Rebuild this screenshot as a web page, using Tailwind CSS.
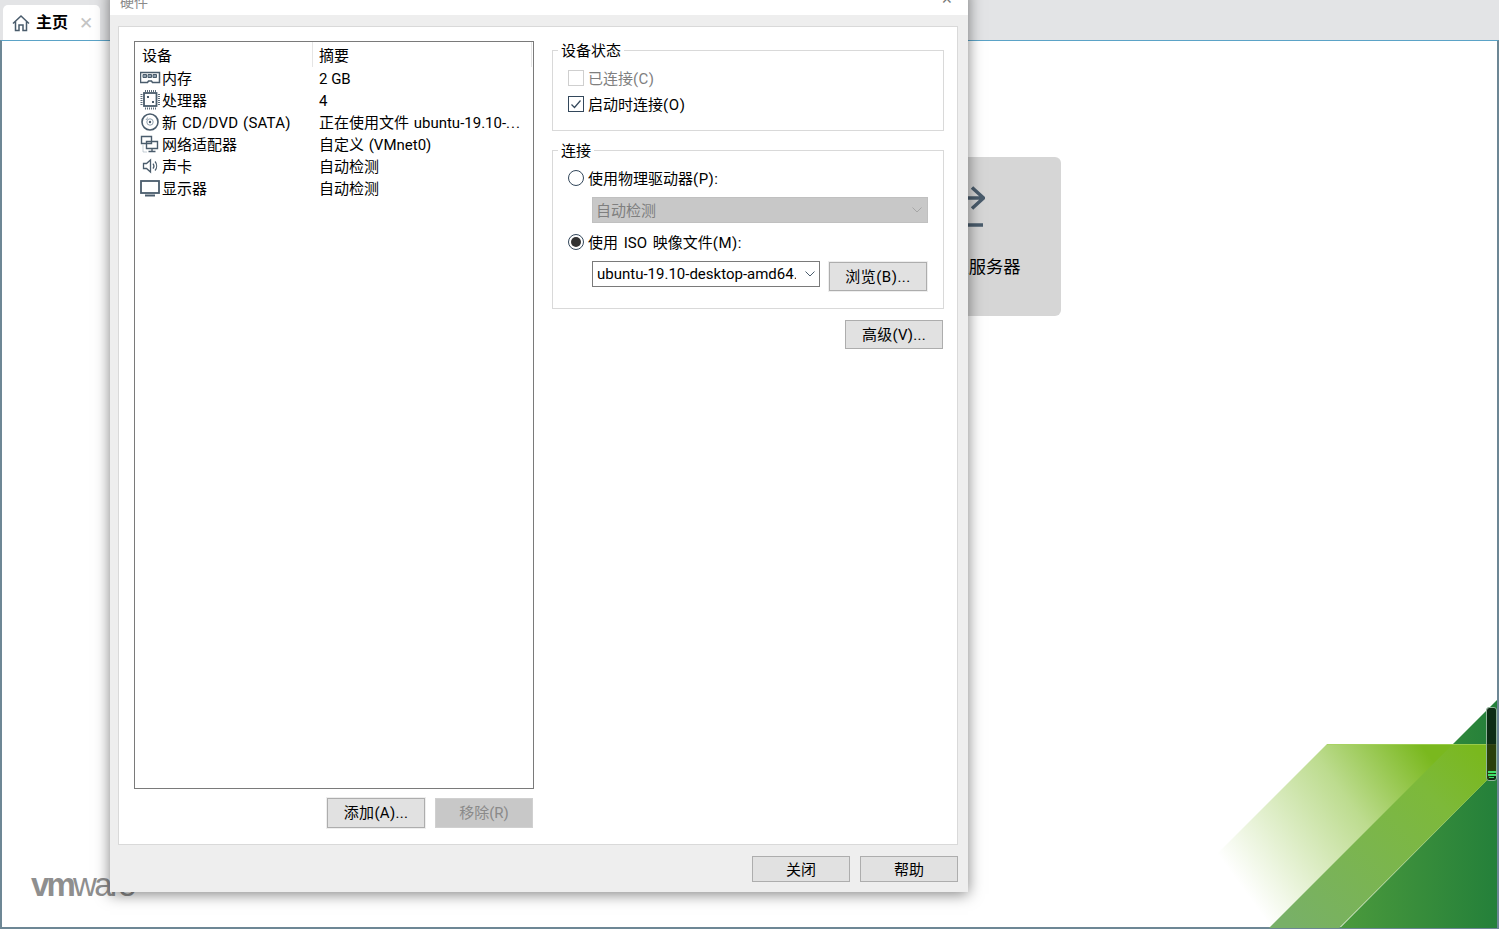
<!DOCTYPE html>
<html lang="zh-CN">
<head>
<meta charset="UTF-8">
<title>硬件</title>
<script src="https://cdn.jsdelivr.net/npm/@tailwindcss/browser@4"></script>
</head>
<body class="relative w-[1499px] h-[929px] overflow-hidden bg-white text-[15px] leading-[20px] text-black font-['Roboto','Noto_Sans_CJK_SC',sans-serif]">

<!-- Tab strip -->
<div class="h-[40px] bg-[#e3e4e6] pl-[3px] pt-[5px]">
    <div class="w-[97px] h-[35px] bg-white rounded-t-[5px] flex items-center pl-[9px]">
        <svg class="w-[18px] h-[18px]" viewBox="0 0 18 18" fill="none" stroke="#4a5c6c" stroke-width="1.500"><path d="M1 9.500 9 2l8 7.500M3.500 7.500V16.500H7V11h4v5.500h3.500V7.500"/></svg>
        <span class="ml-[6px] text-[16px] font-bold">主页</span>
        <span class="ml-[11px] text-[#c4c4c4] text-[17px]">✕</span>
    </div>
</div>

<!-- Main area -->
<div class="relative h-[889px] border-t border-t-[#5ba3c7] border-x-2 border-b-2 border-x-[#6d8795] border-b-[#6d8795] bg-white">
    <!-- Connect card -->
    <div class="absolute left-[858px] top-[116px] w-[201px] h-[159px] pr-[1px] bg-[#d6d6d6] rounded-[6px] flex flex-col items-center pt-[28px]">
        <svg class="w-[50px] h-[45px]" viewBox="0 0 50 45" fill="none" stroke="#4a5c6c" stroke-width="3.500"><path d="M0 13H48M37 2.500l11.500 10.500-11.500 10.500M0 40H48"/></svg>
        <span class="mt-[27px] text-[17.300px] whitespace-nowrap">连接远程服务器</span>
    </div>

    <!-- vmware logo -->
    <div class="absolute left-[29px] top-[826px] font-['Liberation_Sans',sans-serif] text-[33px] leading-[36px] tracking-[-2.800px] text-[#8f8f8f]"><span class="font-bold">vm</span>ware</div>

    <!-- Corner graphic -->
    <svg class="absolute left-[1198px] top-[649px]" width="299" height="238" viewBox="1200 690 299 238">
        <defs>
            <linearGradient id="darkGreen" x1="1340" y1="0" x2="1497" y2="0" gradientUnits="userSpaceOnUse">
                <stop offset="0" stop-color="#4b9a3c"/><stop offset="1" stop-color="#24803a"/>
            </linearGradient>
            <linearGradient id="midGreen" x1="1290" y1="927" x2="1470" y2="744" gradientUnits="userSpaceOnUse">
                <stop offset="0" stop-color="#78b068"/><stop offset="0.75" stop-color="#7db93a"/><stop offset="1" stop-color="#7ab81e"/>
            </linearGradient>
            <linearGradient id="fadeGreen" x1="1240" y1="885" x2="1425" y2="750" gradientUnits="userSpaceOnUse">
                <stop offset="0" stop-color="#7ab81e" stop-opacity="0"/><stop offset="0.6" stop-color="#7ab81e" stop-opacity="0.5"/><stop offset="1" stop-color="#7ab81e"/>
            </linearGradient>
        </defs>
        <polygon points="1497,700 1497,928 1340,928 1487,780 1452,745" fill="url(#darkGreen)"/>
        <polygon points="1327,744 1497,744 1497,770 1339,928 1269,928 1211,860" fill="url(#fadeGreen)"/>
        <polygon points="1269,928 1453,744 1497,744 1497,770 1339,928" fill="url(#midGreen)"/>
        <line x1="1327" y1="744.500" x2="1497" y2="744.500" stroke="#a6d35c" stroke-opacity="0.7"/>
    </svg>

    <!-- Level indicator -->
    <div class="absolute left-[1484px] top-[666px] w-[11px] h-[74px] rounded-[3px] border border-[#8fb59a] bg-black/65 flex flex-col justify-end items-center pb-[2px] gap-[1px]">
        <span class="w-[8px] h-[2px] bg-[#3fe06a]"></span>
        <span class="w-[8px] h-[2px] bg-[#3fe06a]"></span>
        <span class="w-[5px] h-[1px] bg-[#3fe06a]"></span>
    </div>
</div>

<!-- Dialog -->
<div class="absolute left-[110px] top-[-13px] w-[858px] h-[905px] flex flex-col bg-[#eeeeee] shadow-[0_2px_14px_rgba(0,0,0,0.5)]">
    <div class="h-[28px] shrink-0 bg-white flex items-end justify-between pl-[10px] pr-[15px] text-[#8a8a8a] text-[14px]">
        <span class="leading-[26px]">硬件</span>
        <span class="leading-[32px] text-[#777777]">✕</span>
    </div>

    <div class="ml-[8px] mt-[11px] w-[840px] h-[819px] shrink-0 bg-white border border-[#d9d9d9] flex pl-[15px] pt-[14px]">
        <!-- Device list -->
        <div class="w-[400px]">
            <div class="h-[748px] border border-[#7a7a7a]">
                <div class="relative h-[25px] flex items-center">
                    <span class="w-[177px] pl-[7px] mt-[2px]">设备</span>
                    <span class="pl-[7px] mt-[2px]">摘要</span>
                    <span class="absolute left-[177px] top-0 h-[25px] w-px bg-[#e5e5e5]"></span>
                    <span class="absolute right-[1px] top-0 h-[25px] w-px bg-[#e5e5e5]"></span>
                </div>
                <div class="h-[22px] flex items-center">
                    <div class="w-[177px] flex items-center pl-[5px]">
                        <svg class="w-[22px] h-[22px] shrink-0" viewBox="0 0 22 22" fill="none" stroke="#4a5c6c"><path d="M.5 5.500h19v10h-7l-1-1.500h-3l-1 1.500h-7z" stroke-width="1.500"/><path d="M3 7.500h3.500v3H3zM8 7.500h3.500v3H8zM13 7.500h3.500v3H13z" fill="#8fa0ae" stroke-width="1"/></svg>
                        <span class="mt-[2px]">内存</span>
                    </div>
                    <span class="pl-[7px] mt-[2px]">2 GB</span>
                </div>
                <div class="h-[22px] flex items-center">
                    <div class="w-[177px] flex items-center pl-[5px]">
                        <svg class="w-[22px] h-[22px] shrink-0" viewBox="0 0 22 22" fill="none" stroke="#4a5c6c"><rect x="4" y="4" width="12.500" height="13" stroke-width="1.800"/><path d="M5 2h11M5 19.500h11M1.500 5v11M19 5v11" stroke-width="2" stroke-dasharray="1 1" stroke="#5f6f7d"/><path d="M7 7h2v2H7zM12 12h2v2h-2z" fill="#4a5c6c" stroke="none"/></svg>
                        <span class="mt-[2px]">处理器</span>
                    </div>
                    <span class="pl-[7px] mt-[2px]">4</span>
                </div>
                <div class="h-[22px] flex items-center">
                    <div class="w-[177px] flex items-center pl-[5px]">
                        <svg class="w-[22px] h-[22px] shrink-0" viewBox="0 0 22 22" fill="none" stroke="#4a5c6c"><circle cx="10" cy="11" r="8" stroke-width="1.600"/><circle cx="10" cy="11" r="3.200" stroke="#8fa0ae" stroke-width="1"/><circle cx="10" cy="11" r="1.200" fill="#4a5c6c" stroke="none"/><path d="M6 9a5 5 0 0 1 2-2.400" stroke="#8fa0ae"/></svg>
                        <span class="mt-[2px] whitespace-nowrap [word-spacing:1px] tracking-[0.2px]">新 CD/DVD (SATA)</span>
                    </div>
                    <span class="pl-[7px] mt-[2px] whitespace-nowrap [word-spacing:1px]">正在使用文件 ubuntu-19.10-<span class="tracking-[1px]">...</span></span>
                </div>
                <div class="h-[22px] flex items-center">
                    <div class="w-[177px] flex items-center pl-[5px]">
                        <svg class="w-[22px] h-[22px] shrink-0" viewBox="0 0 22 22" fill="none" stroke="#4a5c6c"><path d="M1.500 3.500h10v7h-10zM6.500 8.500h11v7h-11zM12 15.500v3M8.500 18.500h7" stroke-width="1.400" fill="white"/><path d="M3 12.500v6.500h4" stroke="#8fa0ae" stroke-dasharray="1 1"/></svg>
                        <span class="mt-[2px]">网络适配器</span>
                    </div>
                    <span class="pl-[7px] mt-[2px] [word-spacing:1px]">自定义 (VMnet0)</span>
                </div>
                <div class="h-[22px] flex items-center">
                    <div class="w-[177px] flex items-center pl-[5px]">
                        <svg class="w-[22px] h-[22px] shrink-0" viewBox="0 0 22 22" fill="none" stroke="#4a5c6c"><path d="M3.500 8.500H6.500L10.500 5V17L6.500 13.500H3.500z" stroke-width="1.300"/><path d="M13 8.500a4 4 0 0 1 0 5M15 6.500a7 7 0 0 1 0 9" stroke-width="1.200"/></svg>
                        <span class="mt-[2px]">声卡</span>
                    </div>
                    <span class="pl-[7px] mt-[2px]">自动检测</span>
                </div>
                <div class="h-[22px] flex items-center">
                    <div class="w-[177px] flex items-center pl-[5px]">
                        <svg class="w-[22px] h-[22px] shrink-0" viewBox="0 0 22 22" fill="none" stroke="#4a5c6c"><rect x="1" y="4" width="18" height="12" stroke-width="1.800"/><path d="M5 18.500h10" stroke-width="2"/></svg>
                        <span class="mt-[2px]">显示器</span>
                    </div>
                    <span class="pl-[7px] mt-[2px]">自动检测</span>
                </div>
            </div>
            <div class="mt-[9px] pr-[1px] flex justify-end gap-[10px]">
                <button class="w-[98px] h-[30px] tracking-[0.3px] bg-[#e1e1e1] border border-[#adadad] outline outline-[#eeeeee]">添加(A)...</button>
                <button class="w-[98px] h-[30px] bg-[#c8c8c8] border border-[#d0d0d0] text-[#8a8a8a]">移除(R)</button>
            </div>
        </div>

        <!-- Settings -->
        <div class="ml-[18px] w-[392px] flex flex-col">
            <div class="mt-[9px] h-[81px] border border-[#d9d9d9] pl-[15px]">
                <div class="-mt-[11px] -ml-[10px] w-fit h-[20px] leading-[22px] bg-white px-[3px]">设备状态</div>
                <div class="mt-[10px] h-[16px] flex items-center gap-[4px] text-[#7f7f7f]">
                    <span class="w-[16px] h-[16px] bg-white border border-[#cfcfcf]"></span>
                    <span class="mt-[2px]">已连接<span class="tracking-[0.4px]">(C)</span></span>
                </div>
                <div class="mt-[10px] h-[16px] flex items-center gap-[4px]">
                    <span class="w-[16px] h-[16px] border border-[#33475b] flex items-center justify-center">
                        <svg class="w-[12px] h-[12px]" viewBox="0 0 12 12" fill="none" stroke="#33475b" stroke-width="1.200"><path d="M1.500 6.500 4.500 9.500 10.500 2.500"/></svg>
                    </span>
                    <span class="mt-[2px]">启动时连接<span class="tracking-[0.6px]">(O)</span></span>
                </div>
            </div>

            <div class="mt-[19px] h-[159px] border border-[#d9d9d9] pl-[15px]">
                <div class="-mt-[11px] -ml-[10px] w-fit h-[20px] leading-[22px] bg-white px-[3px]">连接</div>
                <div class="mt-[10px] h-[16px] flex items-center gap-[4px]">
                    <span class="w-[16px] h-[16px] rounded-full border border-[#33475b]"></span>
                    <span class="mt-[2px]">使用物理驱动器<span class="tracking-[0.5px]">(P):</span></span>
                </div>
                <div class="mt-[11px] ml-[24px] w-[336px] h-[26px] bg-[#c8c8c8] border border-[#c0c0c0] flex items-center justify-between pl-[3px] pr-[5px] text-[#7f7f7f]">
                    <span class="mt-[2px]">自动检测</span>
                    <svg class="w-[10px] h-[6px]" viewBox="0 0 10 6" fill="none" stroke="#a6a6a6"><path d="M.5.500 5 5 9.500.5"/></svg>
                </div>
                <div class="mt-[11px] h-[16px] flex items-center gap-[4px]">
                    <span class="w-[16px] h-[16px] rounded-full border border-[#33475b] flex items-center justify-center">
                        <span class="w-[10px] h-[10px] rounded-full bg-[#333333]"></span>
                    </span>
                    <span class="mt-[2px] [word-spacing:2px] whitespace-nowrap">使用 ISO 映像文件<span class="tracking-[0.5px]">(M):</span></span>
                </div>
                <div class="mt-[11px] ml-[24px] flex items-start">
                    <div class="w-[228px] h-[26px] pb-[1px] bg-white border border-[#7a7a7a] flex items-center pl-[4px] pr-[4px]">
                        <span class="w-[199px] overflow-hidden whitespace-nowrap">ubuntu-19.10-desktop-amd64.iso</span>
                        <svg class="ml-auto w-[10px] h-[6px] shrink-0" viewBox="0 0 10 6" fill="none" stroke="#4a5c6c"><path d="M.5.500 5 5 9.500.5"/></svg>
                    </div>
                    <button class="ml-[9px] mt-[1px] w-[98px] h-[29px] tracking-[0.5px] bg-[#e1e1e1] border border-[#adadad] outline outline-[#eeeeee]">浏览(B)...</button>
                </div>
            </div>

            <button class="mt-[11px] mr-[1px] self-end w-[98px] h-[29px] tracking-[0.3px] bg-[#e1e1e1] border border-[#adadad]">高级(V)...</button>
        </div>
    </div>

    <!-- Footer buttons -->
    <div class="mt-[11px] pr-[10px] flex justify-end gap-[10px]">
        <button class="w-[98px] h-[26px] pt-[2px] bg-[#e1e1e1] border border-[#adadad]">关闭</button>
        <button class="w-[98px] h-[26px] pt-[2px] bg-[#e1e1e1] border border-[#adadad]">帮助</button>
    </div>
</div>

</body>
</html>
